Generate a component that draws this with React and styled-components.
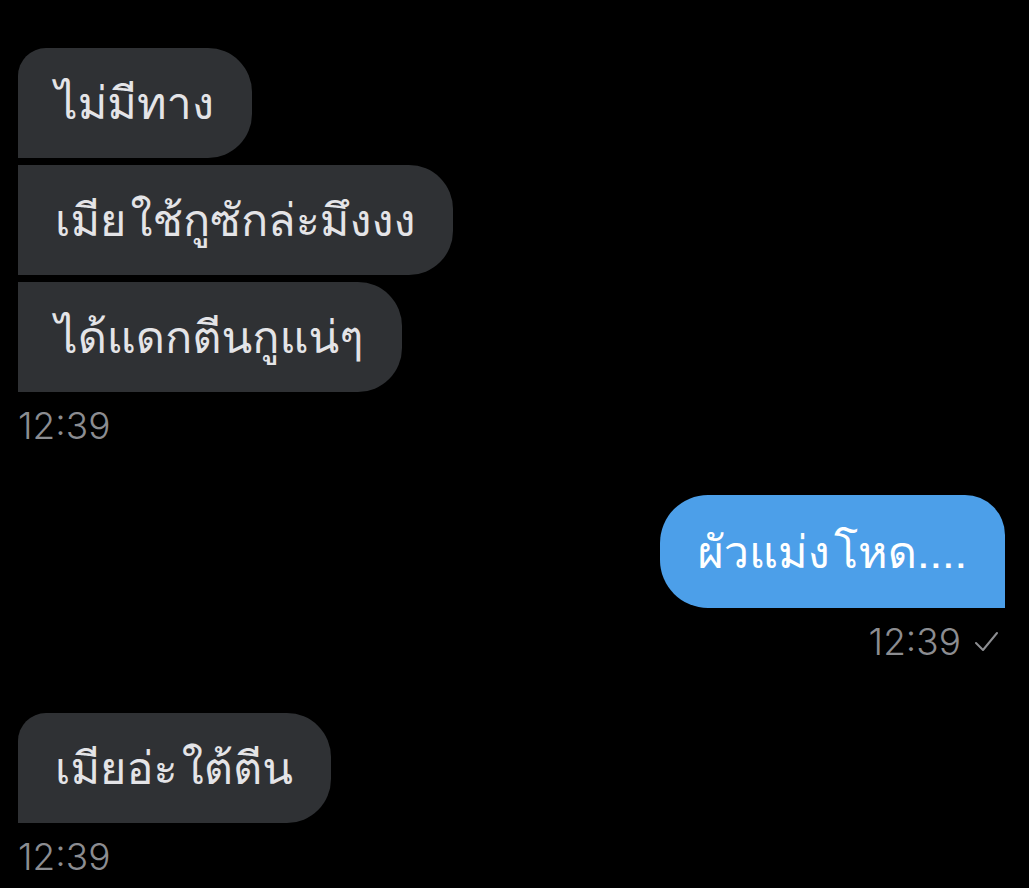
import React from 'react';
import styled, { createGlobalStyle } from 'styled-components';

const GlobalStyle = createGlobalStyle`
  html, body {
    margin: 0;
    padding: 0;
    background: #000;
  }
  body {
    font-family: "Loma", "Noto Sans Thai Looped", "Noto Sans Thai", "Noto Sans", sans-serif;
  }
`;

const Screen = styled.div`
  width: 1029px;
  height: 888px;
  background: #000;
  padding-top: 48px;
  box-sizing: border-box;
  overflow: hidden;
  display: flex;
  flex-direction: column;
`;

const Group = styled.div`
  display: flex;
  flex-direction: column;
  align-items: ${p => (p.$out ? 'flex-end' : 'flex-start')};
  gap: 7px;
  padding: ${p => (p.$out ? '0 24px 0 0' : '0 0 0 18px')};
  margin-top: ${p => p.$top || 0}px;
`;

const Bubble = styled.div`
  box-sizing: border-box;
  height: ${p => (p.$out ? 113 : 110)}px;
  display: flex;
  align-items: center;
  padding: 0 38px 0 37px;
  font-size: 45px;
  line-height: 54px;
  word-spacing: -11px;
  white-space: nowrap;
  background: ${p => (p.$out ? '#4c9fe9' : '#2f3134')};
  color: ${p => (p.$out ? '#ffffff' : '#e4e4e7')};
  border-radius: ${p => p.$radius};
`;

const Time = styled.div`
  display: flex;
  align-items: center;
  gap: 14px;
  font-family: "Inter", "Roboto", sans-serif;
  font-weight: 300;
  font-size: 37px;
  line-height: 42px;
  color: #8c8d91;
  margin-top: 6px;
  margin-right: ${p => (p.$out ? 6 : 0)}px;
`;

const Check = () => (
  <svg width="24" height="24" viewBox="0 0 24 24" fill="none">
    <path d="M1 13 L8 20 L22 3" stroke="#8c8d91" strokeWidth="2" strokeLinecap="round" strokeLinejoin="round" />
  </svg>
);

export default function App() {
  return (
    <Screen>
      <GlobalStyle />
      <Group>
        <Bubble $radius="28px 44px 44px 0">ไม่มีทาง</Bubble>
        <Bubble $radius="0 44px 44px 0">เมีย ใช้กูซักล่ะมึงงง</Bubble>
        <Bubble $radius="0 44px 44px 0">ได้แดกตีนกูแน่ๆ</Bubble>
        <Time>12:39</Time>
      </Group>
      <Group $out $top={48}>
        <Bubble $out $radius="48px 40px 0 48px">ผัวแม่ง โหด....</Bubble>
        <Time $out>
          12:39
          <Check />
        </Time>
      </Group>
      <Group $top={50}>
        <Bubble $radius="28px 44px 44px 0">เมียอ่ะ ใต้ตีน</Bubble>
        <Time>12:39</Time>
      </Group>
    </Screen>
  );
}
